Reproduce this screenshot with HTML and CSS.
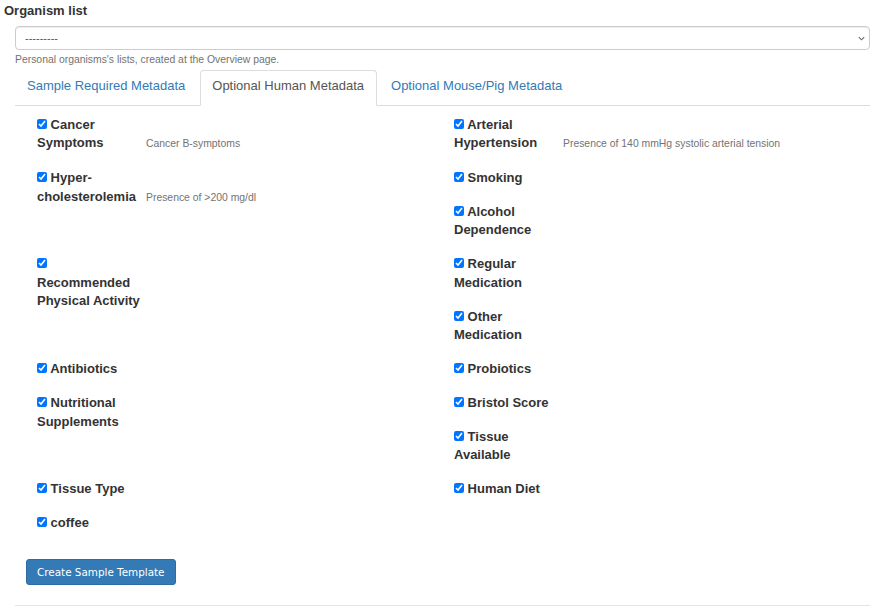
FILE: index.html
```html
<!DOCTYPE html>
<html>
<head>
<meta charset="utf-8">
<link rel="stylesheet" href="styles.css">
</head>
<body>
<div class="page">
  <label class="title" for="org">Organism list</label>
  <div class="inner">
    <div class="select-wrap">
      <select id="org" class="select"><option>---------</option></select>
      <svg class="chev" width="7" height="5" viewBox="0 0 7 5" aria-hidden="true"><path d="M0.8 1.2 L3.5 3.8 L6.2 1.2" fill="none" stroke="#666" stroke-width="1.1"/></svg>
    </div>
    <p class="help top-help">Personal organisms's lists, created at the Overview page.</p>
    <ul class="tabs">
      <li class="tab"><a href="#">Sample Required Metadata</a></li>
      <li class="tab active"><a href="#">Optional Human Metadata</a></li>
      <li class="tab"><a href="#">Optional Mouse/Pig Metadata</a></li>
    </ul>
    <div class="pane">
      <div class="grid">
        <div class="item"><label class="lbl"><input type="checkbox" checked> Cancer Symptoms</label><span class="help">Cancer B-symptoms</span></div>
        <div class="item"><label class="lbl"><input type="checkbox" checked> Arterial Hypertension</label><span class="help">Presence of 140 mmHg systolic arterial tension</span></div>
        <div class="item span2"><label class="lbl"><input type="checkbox" checked> Hyper-cholesterolemia</label><span class="help">Presence of &gt;200 mg/dl</span></div>
        <div class="item"><label class="lbl"><input type="checkbox" checked> Smoking</label></div>
        <div class="item"><label class="lbl"><input type="checkbox" checked> Alcohol Dependence</label></div>
        <div class="item span2"><label class="lbl"><input type="checkbox" checked> Recommended Physical Activity</label></div>
        <div class="item"><label class="lbl"><input type="checkbox" checked> Regular Medication</label></div>
        <div class="item"><label class="lbl"><input type="checkbox" checked> Other Medication</label></div>
        <div class="item"><label class="lbl"><input type="checkbox" checked> Antibiotics</label></div>
        <div class="item"><label class="lbl"><input type="checkbox" checked> Probiotics</label></div>
        <div class="item span2"><label class="lbl"><input type="checkbox" checked> Nutritional Supplements</label></div>
        <div class="item"><label class="lbl"><input type="checkbox" checked> Bristol Score</label></div>
        <div class="item"><label class="lbl"><input type="checkbox" checked> Tissue Available</label></div>
        <div class="item"><label class="lbl"><input type="checkbox" checked> Tissue Type</label></div>
        <div class="item"><label class="lbl"><input type="checkbox" checked> Human Diet</label></div>
        <div class="item"><label class="lbl"><input type="checkbox" checked> coffee</label></div>
      </div>
      <button class="btn" type="button">Create Sample Template</button>
    </div>
  </div>
</div>
</body>
</html>
```

FILE: styles.css
```css
html, body {
  margin: 0;
  padding: 0;
  background: #fff;
}
body {
  font-family: "Liberation Sans", Arial, sans-serif;
  font-size: 13px;
  line-height: 1.42857;
  color: #333;
}
.page {
  padding: 0 9px 0 4px;
}
.title {
  display: block;
  font-weight: bold;
  padding-top: 2px;
  margin-bottom: 5px;
}
.inner {
  margin-left: 11px;
}
.select-wrap {
  position: relative;
}
.select {
  display: block;
  width: 100%;
  height: 24px;
  margin: 0;
  padding: 0 9px;
  -webkit-appearance: none;
  appearance: none;
  font-family: "Liberation Sans", Arial, sans-serif;
  font-size: 11px;
  color: #555;
  background: #fff;
  border: 1px solid #ccc;
  border-radius: 4px;
  box-shadow: inset 0 1px 1px rgba(0,0,0,.075);
}
.chev {
  position: absolute;
  right: 5px;
  top: 10px;
  pointer-events: none;
}
.help {
  font-size: 10.4px;
  color: #737373;
}
.top-help {
  margin: 2px 0 0;
  line-height: 15px;
}
.tabs {
  list-style: none;
  margin: 3px 0 0;
  padding: 0;
  display: flex;
  border-bottom: 1px solid #ddd;
}
.tab {
  margin-right: 2px;
  margin-bottom: -1px;
}
.tab a {
  display: block;
  padding: 6px 12px 10px 11px;
  border: 1px solid transparent;
  border-radius: 4px 4px 0 0;
  color: #337ab7;
  text-decoration: none;
}
.tab.active a {
  color: #555;
  background: #fff;
  border-color: #ddd #ddd transparent;
}
.pane {
  padding-top: 9.5px;
  border-bottom: 1px solid #e5e5e5;
  padding-bottom: 20px;
}
.grid {
  display: grid;
  grid-template-columns: 417px 1fr;
  padding-left: 22px;
  align-items: start;
}
.item {
  margin-bottom: 15.3px;
  line-height: 18.57px;
}
.span2 {
  grid-row: span 2;
}
.lbl {
  display: inline-block;
  width: 105px;
  font-weight: bold;
  vertical-align: baseline;
}
.lbl input {
  width: 10px;
  height: 10px;
  margin: 0;
  vertical-align: baseline;
}
.item .help {
  margin-left: 4px;
}
.btn {
  display: block;
  margin: 11px 0 0 11px;
  padding: 5px 10px;
  font-family: "DejaVu Sans", sans-serif;
  font-size: 10.4px;
  line-height: 14px;
  color: #fff;
  background: #337ab7;
  border: 1px solid #2e6da4;
  border-radius: 3px;
}
```
